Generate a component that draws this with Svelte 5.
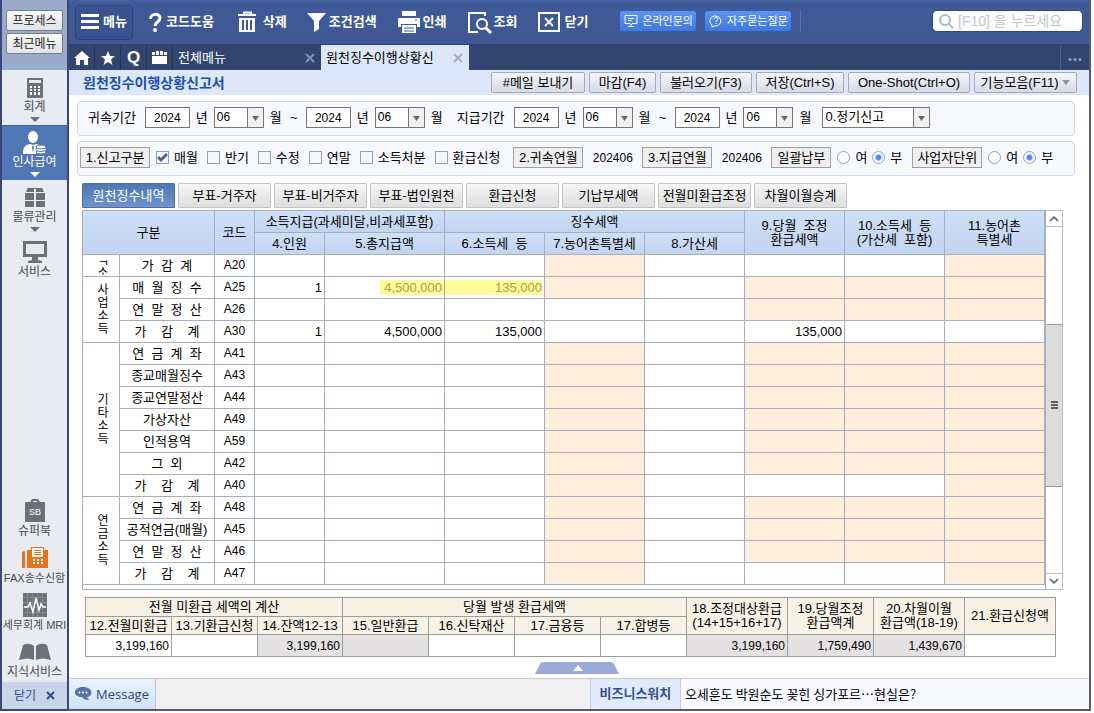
<script>
  const tools = [
    { icon: 'help', label: '코드도움', w: 14 },
    { icon: 'trash', label: '삭제', w: 24 },
    { icon: 'filter', label: '조건검색', w: 17 },
    { icon: 'print', label: '인쇄', w: 21 },
    { icon: 'find', label: '조회', w: 22 },
    { icon: 'close', label: '닫기', w: 22 }
  ];

  const actions = [
    { label: '#메일 보내기', w: 94 },
    { label: '마감(F4)', w: 67 },
    { label: '불러오기(F3)', w: 92 },
    { label: '저장(Ctrl+S)', w: 88 },
    { label: 'One-Shot(Ctrl+O)', w: 122 }
  ];

  const kinds = [
    { label: '매월', on: true },
    { label: '반기' },
    { label: '수정' },
    { label: '연말' },
    { label: '소득처분' },
    { label: '환급신청' }
  ];

  const tabs = ['원천징수내역', '부표-거주자', '부표-비거주자', '부표-법인원천', '환급신청', '기납부세액', '전월미환급조정', '차월이월승계'];

  const cols = [37, 95, 40, 70, 120, 100, 100, 100, 100, 100, 100];
  const sumCols = [86, 86, 85, 86, 86, 86, 86, 101, 86, 91, 91];

  // shade lists the value columns (0-7) that take no entry
  const rows = [
    { group: '직소', span: 1, cut: true, name: '가  감  계', code: 'A20', shade: [3, 7] },
    { group: '사업소득', span: 3, name: '매  월  징  수', code: 'A25', shade: [3, 5, 6, 7], vals: ['1', '4,500,000', '135,000'], mark: [1, 2] },
    { name: '연  말  정  산', code: 'A26', shade: [5, 6, 7] },
    { name: '가    감    계', code: 'A30', shade: [], vals: ['1', '4,500,000', '135,000', '', '', '135,000'] },
    { group: '기타소득', span: 7, name: '연  금  계  좌', code: 'A41', shade: [3, 5, 6, 7] },
    { name: '종교매월징수', code: 'A43', shade: [3, 5, 6, 7] },
    { name: '종교연말정산', code: 'A44', shade: [3, 5, 6, 7] },
    { name: '가상자산', code: 'A49', shade: [3, 5, 6, 7] },
    { name: '인적용역', code: 'A59', shade: [3, 5, 6, 7] },
    { name: '그  외', code: 'A42', shade: [3, 5, 6, 7] },
    { name: '가    감    계', code: 'A40', shade: [3, 7] },
    { group: '연금소득', span: 4, name: '연  금  계  좌', code: 'A48', shade: [3, 5, 6, 7] },
    { name: '공적연금(매월)', code: 'A45', shade: [3, 5, 6, 7] },
    { name: '연  말  정  산', code: 'A46', shade: [3, 5, 6, 7] },
    { name: '가    감    계', code: 'A47', shade: [3, 7] }
  ];

  const totals = [
    { v: '3,199,160' }, { v: '' }, { v: '3,199,160', g: true }, { v: '', g: true },
    { v: '' }, { v: '' }, { v: '' }, { v: '3,199,160', g: true },
    { v: '1,759,490', g: true }, { v: '1,439,670', g: true }, { v: '' }
  ];
</script>

{#snippet period(id, name)}
  <span class="date">
    <input class="year" aria-label="{name} 연도" id="{id}-year" value="2024" />
    <label for="{id}-year">년</label>
    <select class="month" id="{id}-month" aria-label="{name} 월"><option>06</option></select>
    <label for="{id}-month">월</label>
  </span>
{/snippet}

<div class="app">
  <aside>
    <div class="quick">
      <button>프로세스</button>
      <button>최근메뉴</button>
    </div>
    <nav class="side">
      <a href="#acc">
        <svg width="16" height="20" viewBox="0 0 16 20"><rect width="16" height="20" rx="1" fill="#6c7078" /><path d="M2 2h12v3H2z" fill="#e4e6ec" /><path d="M3 8h2v2H3zm4 0h2v2H7zm4 0h2v2h-2zM3 11h2v2H3zm4 0h2v2H7zm4 0h2v2h-2zM3 14h2v3H3zm4 0h2v3H7zm4 0h2v3h-2z" fill="#fff" /></svg>
        <span>회계</span><i></i>
      </a>
      <a href="#hr" class="on">
        <svg width="24" height="24" viewBox="0 0 24 24"><ellipse cx="10" cy="6" rx="5" ry="6" fill="#fff" /><path d="M0 23c0-7 2-9 7-10l3 1 3-1c2 0 4 1 5 2-3 0-5 1-5 3v5z" fill="#fff" /><path d="M10 14l1 2-1 6-1-6z" fill="#4f77b3" /><g fill="#fff" stroke="#4f77b3"><ellipse cx="18" cy="21" rx="5" ry="2" /><ellipse cx="18" cy="18.500" rx="5" ry="2" /><ellipse cx="18" cy="16" rx="5" ry="2" /></g></svg>
        <span>인사급여</span><i></i>
      </a>
      <a href="#stock">
        <svg width="20" height="20" viewBox="0 0 20 20" fill="#6c7078"><path d="M3 0h6v4H1zM11 0h6l2 4h-8zM0 5h9v7H0zM11 5h9v7h-9zM0 13h9v6H0zM11 13h9v6h-9z" /><path d="M3 0h14l1 1H2z" /></svg>
        <span>물류관리</span><i></i>
      </a>
      <a href="#svc">
        <svg width="24" height="22" viewBox="0 0 24 22" fill="#6c7078"><path d="M0 0h24v16H0zM3 3v10h18V3z" fill-rule="evenodd" /><path d="M9 16h6v3l4 1v2H5v-2l4-1z" /></svg>
        <span>서비스</span>
      </a>
    </nav>
    <nav class="extra">
      <a href="#sb">
        <svg width="22" height="24" viewBox="0 0 22 24"><path d="M1 3h5l2-3h6l2 3h5v20H1z" fill="#6c7078" /><path d="M9 2h4v1H9z" fill="#e9ebf2" /><text x="11" y="16" text-anchor="middle" font-size="9" font-family="Liberation Sans" fill="#fff">SB</text></svg>
        <span>슈퍼북</span>
      </a>
      <a href="#fax">
        <svg width="28" height="24" viewBox="0 0 28 24"><path d="M1 7q0-2 3-2v17H1zM6 4h4V1h13v3h4v18H6z" fill="#e8711c" /><path d="M11 1h11v10H11z" fill="#fff" /><path d="M13 4h7v1h-7zM13 6h7v1h-7zM13 8h7v1h-7zM10 1h13v1H10z" fill="#e8711c" /><path d="M12 13h2v2h-2zm4 0h2v2h-2zm4 0h2v2h-2zM12 16h2v2h-2zm4 0h2v2h-2zm4 0h2v2h-2z" fill="#fff" /></svg>
        <span class="sm">FAX송수신함</span>
      </a>
      <a href="#mri">
        <svg width="24" height="24" viewBox="0 0 24 24"><path d="M0 0h24v24H0z" fill="#6c7078" /><path d="M4.500 0v24M9.500 0v24M14.500 0v24M19.500 0v24M0 4.500h24M0 9.500h24M0 14.500h24M0 19.500h24" stroke="#858992" /><path d="M1 14h4l2-4 3 9 3-14 3 12 2-6 2 3h3" fill="none" stroke="#fff" stroke-width="1.500" /></svg>
        <span class="sm">세무회계 MRI</span>
      </a>
      <a href="#know">
        <svg width="32" height="18" viewBox="0 0 32 18" fill="#6c7078"><path d="M4 2q6-3 11 1v14q-6-3-15 0zM28 2q-6-3-11 1v14q6-3 15 0z" /></svg>
        <span>지식서비스</span>
      </a>
    </nav>
    <button class="fold">닫기 <svg width="9" height="9" viewBox="0 0 9 9"><path d="M1 1l7 7M8 1L1 8" stroke="#33508c" stroke-width="2" /></svg></button>
  </aside>

  <main>
    <header>
      <button class="menu">
        <svg width="18" height="16" viewBox="0 0 18 16" fill="#fff"><path d="M0 0h18v3H0zM0 6h18v3H0zM0 12h18v3H0z" /></svg>
        메뉴
      </button>
      <div class="tools">
        {#each tools as t}
          <button>
            <svg width={t.w} height="24" viewBox="0 0 {t.w} 24" fill="none" stroke="#fff" stroke-width="2">
              {#if t.icon === 'help'}
                <path d="M2.500 9c0-6 9.500-6 9.500-1 0 4-5 4-5 8" stroke-width="3" /><circle cx="7" cy="20" r="2" fill="#fff" stroke="none" />
              {:else if t.icon === 'trash'}
                <path d="M3 5h18M9 4V2.500h7V4" /><path d="M4 8h16v14H4z" fill="#fff" stroke="none" /><path d="M8 10v10M12 10v10M16 10v10" stroke="#405a98" />
              {:else if t.icon === 'filter'}
                <path d="M-1 3h19l-7 8v8l-5 3v-11z" fill="#fff" stroke="none" />
              {:else if t.icon === 'print'}
                <g stroke="none" fill="#fff"><path d="M4 1h14v5H4zM0 8h22v9h-3v-3H3v3H0z" /><path d="M4 15h14v8H4z" /></g><path d="M6 18h10M6 21h10M17 10h2" stroke="#405a98" stroke-width="1" />
              {:else if t.icon === 'find'}
                <path d="M17 6V3H1v19h9" /><circle cx="14" cy="14" r="5" /><path d="M18 18l5 5" stroke-width="3" />
              {:else}
                <path d="M1 3h20v18H1z" /><path d="M7 8l8 8M15 8l-8 8" stroke-width="2" />
              {/if}
            </svg>
            {t.label}
          </button>
        {/each}
      </div>
      <div class="pills">
        <button>
          <svg width="14" height="14" viewBox="0 0 14 14" fill="none" stroke="#fff"><path d="M1 1.500h12v8H8l-1 2-1-2H1zM4 4.500h6M4 6.500h4M4 12.500h6" /></svg>
          온라인문의
        </button>
        <button>
          <svg width="14" height="14" viewBox="0 0 14 14" fill="none" stroke="#fff"><path d="M3 11a5.500 5 0 1 1 3 1l-3 1z" /><path d="M5 5c0-2 4-2 4 0 0 1-2 1-2 3M7 9v1" /></svg>
          자주묻는질문
        </button>
      </div>
      <label class="search">
        <svg width="16" height="16" viewBox="0 0 16 16" fill="none" stroke="#a9b9d8" stroke-width="2"><circle cx="7" cy="7" r="5" /><path d="M11 11l4 4" /></svg>
        <input placeholder="[F10] 을 누르세요" aria-label="검색" />
      </label>
    </header>

    <nav class="wins">
      <button class="ic" aria-label="홈"><svg width="16" height="14" viewBox="0 0 16 14" fill="#fff"><path d="M8 0l8 7h-2v7h-4V9H6v5H2V7H0z" /></svg></button>
      <button class="ic" aria-label="즐겨찾기"><svg width="14" height="14" viewBox="0 0 14 14" fill="#fff"><path d="M7 0l2 5h5l-4 3.500 1.500 5.500L7 11l-4.500 3L4 8.500 0 5h5z" /></svg></button>
      <button class="ic q">Q</button>
      <button class="ic" aria-label="창"><svg width="15" height="13" viewBox="0 0 15 13" fill="#fff"><path d="M0 1h3v3H0zM4 0h3v4H4zM8 0h3v4H8zM12 1h3v3h-3zM0 5h15v8H0z" /></svg></button>
      <div class="win"><a href="#all">전체메뉴</a><button aria-label="탭 닫기"><svg width="10" height="10" viewBox="0 0 10 10"><path d="M1 1l8 8M9 1L1 9" stroke="#8291b6" stroke-width="2" /></svg></button></div>
      <div class="win on"><a href="#wh">원천징수이행상황신</a><button aria-label="탭 닫기"><svg width="10" height="10" viewBox="0 0 10 10"><path d="M1 1l8 8M9 1L1 9" stroke="#a3adbf" stroke-width="2" /></svg></button></div>
      <button class="more" aria-label="더보기"><svg width="14" height="3" viewBox="0 0 14 3" fill="#8fa0c6"><circle cx="2" cy="1.500" r="1.500" /><circle cx="7" cy="1.500" r="1.500" /><circle cx="12" cy="1.500" r="1.500" /></svg></button>
    </nav>

    <div class="head">
      <h1>원천징수이행상황신고서</h1>
      <div class="acts">
        {#each actions as a}
          <button style:min-width="{a.w}px">{a.label}</button>
        {/each}
        <button class="drop">기능모음(F11)<i></i></button>
      </div>
    </div>

    <section class="panel">
      <span class="lead">귀속기간</span>
      {@render period('from1', '귀속 시작')}
      <span class="tilde">~</span>
      {@render period('to1', '귀속 종료')}
      <span class="lead second">지급기간</span>
      {@render period('from2', '지급 시작')}
      <span class="tilde">~</span>
      {@render period('to2', '지급 종료')}
      <select class="kind" aria-label="신고 종류"><option>0.정기신고</option></select>
    </section>

    <section class="panel opts">
      <button class="box">1.신고구분</button>
      <div class="checks">
        {#each kinds as k}
          <label><input type="checkbox" checked={k.on} />{k.label}</label>
        {/each}
      </div>
      <button class="box">2.귀속연월</button>
      <span class="ym">202406</span>
      <button class="box">3.지급연월</button>
      <span class="ym">202406</span>
      <button class="box short">일괄납부</button>
      <div class="radios">
        <label><input type="radio" name="bulk" />여</label>
        <label><input type="radio" name="bulk" checked />부</label>
      </div>
      <button class="box">사업자단위</button>
      <div class="radios">
        <label><input type="radio" name="unit" />여</label>
        <label><input type="radio" name="unit" checked />부</label>
      </div>
    </section>

    <div class="tabs">
      {#each tabs as t, i}
        <button class:on={i === 0}>{t}</button>
      {/each}
    </div>

    <div class="grid">
      <div class="frame">
        <table>
          <colgroup>{#each cols as w}<col style:width="{w}px" />{/each}</colgroup>
          <thead>
            <tr>
              <th colspan="2" rowspan="2">구분</th>
              <th rowspan="2">코드</th>
              <th colspan="2">소득지급(과세미달,비과세포함)</th>
              <th colspan="3">징수세액</th>
              <th rowspan="2">9.당월&nbsp; 조정<br />환급세액</th>
              <th rowspan="2">10.소득세&nbsp; 등<br />(가산세&nbsp; 포함)</th>
              <th rowspan="2">11.농어촌<br />특별세</th>
            </tr>
            <tr>
              <th>4.인원</th>
              <th>5.총지급액</th>
              <th>6.소득세&nbsp; 등</th>
              <th>7.농어촌특별세</th>
              <th>8.가산세</th>
            </tr>
          </thead>
          <tbody>
            {#each rows as r}
              <tr>
                {#if r.group}
                  <td class="group" rowspan={r.span}><div class:cut={r.cut}><span>{r.group}</span></div></td>
                {/if}
                <td class="name">{r.name}</td>
                <td class="code">{r.code}</td>
                {#each { length: 8 } as _, c}
                  <td class="num" class:shade={r.shade.includes(c)}>
                    {#if r.mark?.includes(c)}<mark class:wide={c === 2}>{r.vals[c]}</mark>{:else}{r.vals?.[c] ?? ''}{/if}
                  </td>
                {/each}
              </tr>
            {/each}
          </tbody>
        </table>
      </div>
      <div class="scroll">
        <button aria-label="위로"><svg width="8" height="5" viewBox="0 0 8 5"><path d="M0 5l4-4 4 4" fill="none" stroke="#555" stroke-width="1.500" /></svg></button>
        <span class="above"></span>
        <span class="thumb"><svg width="7" height="8" viewBox="0 0 7 8" fill="#606060"><path d="M0 0h7v2H0zM0 3h7v2H0zM0 6h7v2H0z" /></svg></span>
        <span class="below"></span>
        <button aria-label="아래로"><svg width="8" height="5" viewBox="0 0 8 5"><path d="M0 0l4 4 4-4" fill="none" stroke="#555" stroke-width="1.500" /></svg></button>
      </div>
    </div>

    <table class="sum">
      <colgroup>{#each sumCols as w}<col style:width="{w}px" />{/each}</colgroup>
      <thead>
        <tr class="r1">
          <th colspan="3">전월 미환급 세액의 계산</th>
          <th colspan="4">당월 발생 환급세액</th>
          <th rowspan="2">18.조정대상환급<br />(14+15+16+17)</th>
          <th rowspan="2">19.당월조정<br />환급액계</th>
          <th rowspan="2">20.차월이월<br />환급액(18-19)</th>
          <th rowspan="2">21.환급신청액</th>
        </tr>
        <tr class="r2">
          <th>12.전월미환급</th>
          <th>13.기환급신청</th>
          <th>14.잔액12-13</th>
          <th>15.일반환급</th>
          <th>16.신탁재산</th>
          <th>17.금융등</th>
          <th>17.합병등</th>
        </tr>
      </thead>
      <tbody>
        <tr>{#each totals as t}<td class:grey={t.g}>{t.v}</td>{/each}</tr>
      </tbody>
    </table>

    <button class="pull" aria-label="펼치기">
      <svg width="84" height="12" viewBox="0 0 84 12"><path d="M0 12L5 2q1-2 3-2h68q2 0 3 2l5 10z" fill="#9aabd8" /><path d="M38 9l5-6 5 6z" fill="#fff" /></svg>
    </button>

    <footer>
      <button class="msg">
        <svg width="16" height="14" viewBox="0 0 16 14"><path d="M8 0c11 0 10 10 4 10l2 3c-4 0-6-1-7-3C-3 10-2 0 8 0z" fill="#5a74a8" /><circle cx="4.500" cy="5.500" r="1" fill="#fff" /><circle cx="8" cy="5.500" r="1" fill="#fff" /><circle cx="11.500" cy="5.500" r="1" fill="#fff" /></svg>
        Message
      </button>
      <span class="gap"></span>
      <strong>비즈니스워치</strong>
      <a href="#news">오세훈도 박원순도 꽂힌 싱가포르…현실은?</a>
    </footer>
  </main>
</div>

<style>
  :global(body) { margin: 0; background: #fff; }
  .app, .app * { box-sizing: border-box; }
  .app {
    display: flex;
    min-height: 100vh;
    font-family: 'Liberation Sans', 'Noto Sans CJK KR', sans-serif;
    font-size: 13px;
    line-height: 16px;
    color: #000;
    border-bottom: 2px solid #fff;
  }
  button, input, select { font: inherit; color: inherit; margin: 0; padding: 0; border: 0; background: none; border-radius: 0; }
  button { cursor: pointer; white-space: nowrap; }
  a { color: inherit; text-decoration: none; }
  svg { display: block; flex: none; overflow: visible; }

  aside {
    flex: none;
    width: 69px;
    display: flex;
    flex-direction: column;
    background: #e9ebf2;
    border: solid #3a4778;
    border-width: 0 2px 2px;
    font-size: 12px;
  }
  .quick { background: #9aabcc; padding: 10px 4px 0; height: 70px; display: flex; flex-direction: column; gap: 2px; }
  .quick button { height: 21px; border: 1px solid #777f8e; border-radius: 2px; background: linear-gradient(#fafafa, #e2e3e6); color: #222; }
  .side a { display: flex; flex-direction: column; align-items: center; height: 55px; padding-top: 6px; }
  .side svg { margin: auto 0; }
  .side a, .extra a { color: #454a55; }
  .side a.on { background: #4f77b3; color: #fff; border-top: 1px solid #3f639c; padding-top: 5px; }
  .side span { line-height: 15px; height: 15px; }
  .side i { margin: 2px 0 3px; border: solid transparent; border-width: 5px 5px 0; border-top-color: #6c7078; }
  .side .on i { border-top-color: #fff; }
  .side a:last-child { padding-bottom: 10px; padding-top: 3px; }
  .extra { margin-top: auto; display: flex; flex-direction: column; gap: 7px; margin-bottom: 2px; }
  .extra a { display: grid; grid-template-rows: 24px 16px; place-items: center; white-space: nowrap; }
  .sm { font-size: 11px; }
  .fold { height: 27px; background: #c8d4ea; color: #33508c; display: flex; align-items: center; justify-content: center; gap: 10px; }

  main { flex: 1; min-width: 0; display: flex; flex-direction: column; border: solid #545b73; border-width: 0 2px 2px 0; margin-right: 3px; }

  header { display: flex; align-items: center; height: 45px; padding: 0 6px; background: linear-gradient(#4662a4, #405a98 4px, #3f5894); border-bottom: 1px solid #2f4374; color: #fff; font-weight: 700; }
  .menu { display: flex; align-items: center; justify-content: center; gap: 4px; width: 58px; height: 35px; border: 1px solid #2d4276; border-radius: 4px; background: #3a5290; }
  .tools { display: flex; gap: 21px; margin-left: 15px; }
  .tools button { display: flex; align-items: center; gap: 4px; }
  .pills { display: flex; gap: 7px; margin-left: 31px; padding-right: 8px; border-right: 1px solid #5872ad; margin-top: -3px; }
  .pills button { display: flex; align-items: center; gap: 4px; height: 22px; padding: 0 3px 0 4px; border: 1px solid #2f5cb4; border-radius: 3px; background: linear-gradient(#5c94ee, #3f78e0); font-size: 11px; font-weight: 400; }
  .search { display: flex; align-items: center; gap: 4px; width: 151px; height: 22px; margin: -3px 0 0 auto; padding: 0 5px; background: #fff; border: 1px solid #33497e; border-radius: 5px; }
  .search input { flex: 1; min-width: 0; font-size: 14px; font-weight: 400; outline: 0; color: #222; }
  .search input::placeholder { color: #c4c6cc; opacity: 1; }

  .wins { display: flex; height: 25px; background: #33456f; }
  .ic { width: 26px; display: grid; place-items: center; border-right: 1px solid #24345c; }
  .q { color: #fff; font: 700 17px/17px 'Liberation Sans', sans-serif; }
  .win { width: 148px; display: flex; align-items: center; justify-content: space-between; padding: 0 6px 0 5px; color: #fff; }
  .win.on { background: #dce8fa; color: #000; }
  .more { margin-left: auto; width: 29px; display: grid; place-items: center; padding-top: 4px; border-left: 1px solid #4c5f8e; }

  .head { display: flex; align-items: center; justify-content: space-between; height: 25px; padding: 0 12px 0 14px; background: #dce8fa; }
  h1 { margin: 0; font-size: 14px; color: #2050a8; line-height: 20px; white-space: nowrap; }
  .acts { display: flex; gap: 4px; }
  .acts button { height: 21px; border: 1px solid #a4abbc; border-radius: 2px; background: linear-gradient(#f3f5f9, #d6dbe6); }
  .acts .drop { display: flex; align-items: center; justify-content: center; min-width: 103px; gap: 4px; }
  .drop i { border: solid transparent; border-width: 5px 4px 0; border-top-color: #8b93a5; }

  .panel { display: flex; align-items: center; height: 35px; margin: 6px 14px 0 8px; padding: 0 2px 2px 10px; border: 1px solid #ccd6ec; border-radius: 4px; background: #f6f8fc; white-space: nowrap; }
  .panel + .panel { margin-top: 5px; padding-left: 2px; }
  .lead { margin-right: 9px; }
  .second { margin-left: 14px; }
  .tilde { width: 24px; text-align: center; }
  .date { display: flex; align-items: center; gap: 6px; }
  .year { width: 45px; height: 21px; border: 1px solid #767676; background: #fff; text-align: center; font-size: 12px; }
  select {
    appearance: none;
    height: 21px;
    border: 1px solid #767676;
    padding: 0 18px 2px 2px;
    background:
      url("data:image/svg+xml,%3Csvg xmlns='http://www.w3.org/2000/svg' width='16' height='19'%3E%3Cpath d='M0 0h1v19H0z' fill='%23767676'/%3E%3Cpath d='M1 0h15v19H1z' fill='%23f0f0f0'/%3E%3Cpath d='M5 8h7l-3.500 5z' fill='%23666'/%3E%3C/svg%3E") right top no-repeat #fff;
  }
  .month { width: 50px; font-size: 12px; }
  .kind { width: 108px; margin-left: 11px; }

  .box { width: 70px; height: 21px; border: 1px solid #a0a0a0; background: #efefef; }
  .short { width: 60px; }
  .checks { display: flex; gap: 9px; margin: 0 13px 0 6px; }
  .checks label, .radios label { display: flex; align-items: center; gap: 5px; }
  .ym { width: 59px; text-align: center; font-size: 12px; }
  .radios { display: flex; gap: 5px; margin: 0 10px 0 6px; }
  input[type='checkbox'], input[type='radio'] { appearance: none; width: 13px; height: 13px; border: 1px solid #8ea0bd; background: #f6f6f4; }
  input[type='checkbox']:checked { background: url("data:image/svg+xml,%3Csvg xmlns='http://www.w3.org/2000/svg' width='11' height='11'%3E%3Cpath d='M1 5l3 3 6-6' fill='none' stroke='%234a6299' stroke-width='3'/%3E%3C/svg%3E") #f6f6f4; }
  input[type='radio'] { border-radius: 50%; background: #fff; }
  input[type='radio']:checked { background: radial-gradient(#4a86f0 0 2px, #bcd2f8 3px, #fff 5px); }

  .tabs { display: flex; gap: 3px; margin: 7px 0 0 13px; }
  .tabs button { width: 93px; height: 25px; border: 1px solid #c4c4c4; border-radius: 1px; background: linear-gradient(#f6f6f6, #dedede); }
  .tabs .on { border-color: #4a6ca8; background: linear-gradient(#5077b4, #6f94cc); color: #fff; }

  .grid { display: flex; margin: 2px 26px 0 13px; }
  .frame { flex: 1; min-width: 0; border: 1px solid #a8aebf; padding-bottom: 4px; }
  table { width: 100%; table-layout: fixed; border-collapse: separate; border-spacing: 0; }
  th, td { padding: 0; font-weight: 400; text-align: center; overflow: hidden; white-space: nowrap; }
  .frame th, .frame td { height: 22px; border: solid #a8aebf; border-width: 0 1px 1px 0; line-height: 15px; }
  .frame th { background: linear-gradient(#cfdff8, #c2d4f1); }
  .frame th[rowspan] { line-height: 14px; }
  .frame .name { white-space: pre; }
  .frame .code { font-size: 12px; }
  .frame .num { text-align: right; padding-right: 2px; }
  .shade { background: #ffeedb; }
  .frame .group { padding-left: 4px; font-size: 12px; white-space: normal; }
  .group div { display: flex; flex-direction: column; align-items: center; line-height: 13px; }
  .group .cut { height: 15px; overflow: hidden; justify-content: center; margin-top: 3px; }
  .group span { flex: none; width: 13px; word-break: break-all; }
  mark { display: inline-block; padding: 0 2px 0 4px; margin-right: -2px; background: #fffa9a; color: #a8a14a; vertical-align: top; }
  mark.wide { display: block; margin-right: 0; padding-right: 0; }

  .scroll { display: flex; flex-direction: column; width: 17px; border: solid #bdbdbd; border-width: 1px 1px 1px 0; }
  .scroll button { height: 16px; display: grid; place-items: center; border-bottom: 1px solid #bdbdbd; }
  .scroll button:last-child { border-bottom: 0; border-top: 1px solid #bdbdbd; }
  .above { flex: 98 0 0; }
  .below { flex: 87 0 0; }
  .thumb { flex: 162 0 0; display: grid; place-items: center; background: #dcdcdc; border: solid #9c9c9c; border-width: 1px 0; }

  .sum { width: auto; margin: 7px 33px 0 16px; border: solid #9c9c9c; border-width: 1px 0 0 1px; }
  .sum th, .sum td { border: solid #9c9c9c; border-width: 0 1px 1px 0; line-height: 14px; }
  .sum th { background: #f6f2e4; }
  .r1 th { height: 19px; }
  .r2 th { height: 18px; }
  .sum td { height: 22px; text-align: right; padding-right: 2px; font-size: 12px; }
  .grey { background: #e4e1e3; }

  .pull { align-self: center; margin: 5px 4px 0 0; }
  footer { display: flex; height: 31px; margin-top: auto; border-top: 1px solid #c8cad2; background: #f7f9fe; }
  .msg { width: 87px; display: flex; align-items: center; justify-content: center; gap: 5px; font: 13px/16px 'Open Sans', sans-serif; color: #2f4674; background: linear-gradient(#eaf3fe, #cfe1f8); border-right: 1px solid #b9c4da; }
  .gap { flex: 437; background: #f0f0f0; }
  strong { width: 91px; display: grid; place-items: center; background: #dfeafc; border: solid #c3cde2; border-width: 0 1px; color: #33508c; }
  footer a { flex: 407; align-self: center; padding-left: 4px; white-space: nowrap; font-family: 'Noto Sans CJK KR', sans-serif; }
</style>
